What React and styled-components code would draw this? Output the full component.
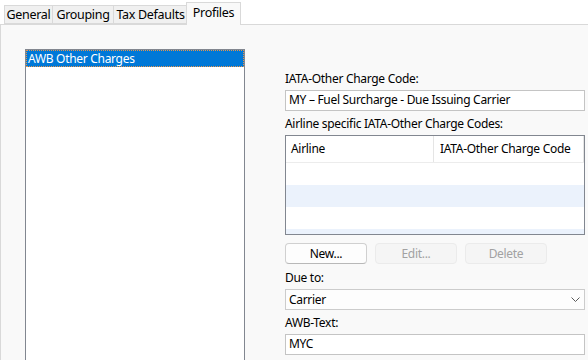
import styled, { createGlobalStyle } from 'styled-components';

const GlobalStyle = createGlobalStyle`
  html, body {
    margin: 0;
    padding: 0;
    background: #ffffff;
    overflow: hidden;
  }
  body {
    font-family: "Noto Sans", "Open Sans", sans-serif;
    font-size: 12px;
    letter-spacing: -0.3px;
    color: #000;
  }
`;

const Window = styled.div`
  width: 588px;
  height: 360px;
  display: flex;
  flex-direction: column;
`;

const TabStrip = styled.div`
  height: 24px;
  display: flex;
  align-items: flex-end;
  padding-left: 4px;
  position: relative;
  z-index: 1;
`;

const Tab = styled.div`
  box-sizing: border-box;
  width: ${(p) => p.$w}px;
  height: ${(p) => (p.$active ? 23 : 19)}px;
  margin: ${(p) => (p.$active ? '0 -1px -1px -2px' : '0 0 0 -1px')};
  padding-top: ${(p) => (p.$active ? 2 : 1)}px;
  display: flex;
  justify-content: center;
  background: ${(p) => (p.$active ? '#f9f9f9' : '#f0f0f0')};
  border: 1px solid #d9d9d9;
  border-bottom: ${(p) => (p.$active ? 'none' : '1px solid #d9d9d9')};
  font-size: 12.5px;
  line-height: 16px;
  &:first-child {
    margin-left: 0;
  }
`;

const Panel = styled.div`
  flex: 1;
  display: flex;
  gap: 40px;
  padding: 24px 0 0 24px;
  background: #f9f9f9;
  border-left: 1px solid #d9d9d9;
  border-top: 1px solid #d9d9d9;
  overflow: hidden;
`;

const ListBox = styled.div`
  width: 220px;
  height: 330px;
  flex-shrink: 0;
  box-sizing: border-box;
  background: #fff;
  border: 1px solid #828790;
`;

const ListItem = styled.div`
  height: 17px;
  box-sizing: border-box;
  background: ${(p) => (p.$selected ? '#0078d7' : 'transparent')};
  color: ${(p) => (p.$selected ? '#fff' : '#000')};
  border: 1px dotted ${(p) => (p.$selected ? '#e8954a' : 'transparent')};
  padding-left: 1px;
  line-height: 15px;
  white-space: nowrap;
`;

const Form = styled.div`
  width: 300px;
  display: flex;
  flex-direction: column;
  padding-top: 22px;
`;

const Label = styled.div`
  height: 16px;
  line-height: 16px;
  margin-bottom: 3px;
  white-space: nowrap;
`;

const TextBox = styled.div`
  box-sizing: border-box;
  height: 21px;
  background: #fff;
  border: 1px solid #c4c4c4;
  padding-left: 3px;
  line-height: 18px;
  margin-bottom: 5px;
  white-space: nowrap;
`;

const ComboBox = styled(TextBox)`
  display: flex;
  align-items: center;
  justify-content: space-between;
  padding-right: 4px;
  background: #fdfdfd;
  border-color: #cccccc;
`;

const Grid = styled.div`
  box-sizing: border-box;
  height: 100px;
  background: #fff;
  border: 1px solid #828790;
  overflow: hidden;
  margin-bottom: 8px;
`;

const GridHeader = styled.div`
  display: grid;
  grid-template-columns: 148px 1fr;
  height: 26px;
  border-bottom: 1px solid #ececec;
`;

const HeaderCell = styled.div`
  padding-left: ${(p) => (p.$first ? 5 : 6)}px;
  line-height: 26px;
  border-right: 1px solid #e5e5e5;
  white-space: nowrap;
`;

const GridRow = styled.div`
  height: 22px;
  background: ${(p) => (p.$alt ? '#ebf2fc' : '#fff')};
`;

const ButtonRow = styled.div`
  display: flex;
  gap: 8px;
  margin-bottom: 6px;
`;

const Button = styled.div`
  box-sizing: border-box;
  width: 82px;
  height: 21px;
  border-radius: 4px;
  display: flex;
  align-items: center;
  justify-content: center;
  background: ${(p) => (p.$disabled ? '#f5f5f5' : '#fdfdfd')};
  color: ${(p) => (p.$disabled ? '#a2a2a2' : '#000')};
  border: 1px solid ${(p) => (p.$disabled ? '#ebebeb' : '#d0d0d0')};
  border-bottom-color: ${(p) => (p.$disabled ? '#ebebeb' : '#b8b8b8')};
`;

const Chevron = () => (
  <svg width="9" height="5" viewBox="0 0 9 5">
    <path d="M0.5 0.5 L4.5 4.5 L8.5 0.5" fill="none" stroke="#5a5a5a" strokeWidth="1" />
  </svg>
);

const tabs = [
  { label: 'General', w: 49 },
  { label: 'Grouping', w: 62 },
  { label: 'Tax Defaults', w: 75 },
  { label: 'Profiles', w: 55, active: true },
];

export default function App() {
  return (
    <Window>
      <GlobalStyle />
      <TabStrip>
        {tabs.map((t) => (
          <Tab key={t.label} $w={t.w} $active={t.active}>
            {t.label}
          </Tab>
        ))}
      </TabStrip>
      <Panel>
        <ListBox>
          <ListItem $selected>AWB Other Charges</ListItem>
        </ListBox>
        <Form>
          <Label>IATA-Other Charge Code:</Label>
          <TextBox>MY – Fuel Surcharge - Due Issuing Carrier</TextBox>
          <Label>Airline specific IATA-Other Charge Codes:</Label>
          <Grid>
            <GridHeader>
              <HeaderCell $first>Airline</HeaderCell>
              <HeaderCell>IATA-Other Charge Code</HeaderCell>
            </GridHeader>
            <GridRow />
            <GridRow $alt />
            <GridRow />
            <GridRow $alt />
          </Grid>
          <ButtonRow>
            <Button>New...</Button>
            <Button $disabled>Edit...</Button>
            <Button $disabled>Delete</Button>
          </ButtonRow>
          <Label>Due to:</Label>
          <ComboBox>
            <span>Carrier</span>
            <Chevron />
          </ComboBox>
          <Label>AWB-Text:</Label>
          <TextBox>MYC</TextBox>
        </Form>
      </Panel>
    </Window>
  );
}
